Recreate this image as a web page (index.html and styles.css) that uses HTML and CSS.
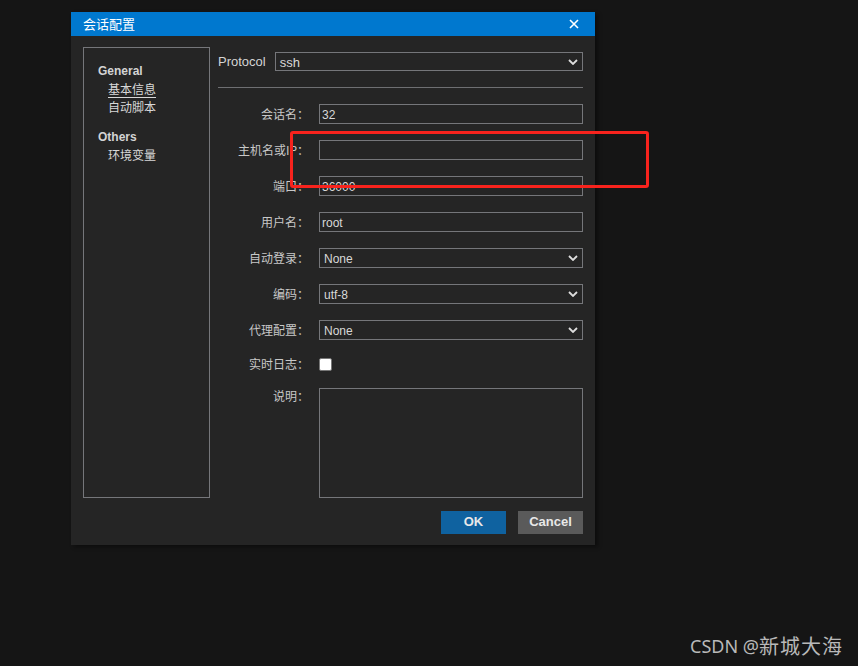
FILE: index.html
```html
<!DOCTYPE html>
<html lang="zh">
<head>
<meta charset="utf-8">
<link rel="stylesheet" href="styles.css">
</head>
<body>
<div class="screen">
  <div class="dialog">
    <div class="titlebar">
      <span class="title">会话配置</span>
      <svg class="close" width="10" height="10" viewBox="0 0 10 10"><path d="M1 1L9 9M9 1L1 9" stroke="#fff" stroke-width="1.6"/></svg>
    </div>
    <div class="body">
      <div class="sidebar">
        <div class="group">General</div>
        <div class="item active">基本信息</div>
        <div class="item">自动脚本</div>
        <div class="group second">Others</div>
        <div class="item">环境变量</div>
      </div>
      <div class="main">
        <div class="protocol">
          <span class="plabel">Protocol</span>
          <div class="select wide"><span>ssh</span><svg width="10" height="6" viewBox="0 0 10 6"><path d="M1 1L5 5L9 1" fill="none" stroke="#ddd" stroke-width="1.8"/></svg></div>
        </div>
        <div class="sep"></div>
        <div class="form">
          <label>会话名：</label><div class="input">32</div>
          <label>主机名或IP：</label><div class="input"></div>
          <label>端口：</label><div class="input">36000</div>
          <label>用户名：</label><div class="input">root</div>
          <label>自动登录：</label><div class="select"><span>None</span><svg width="10" height="6" viewBox="0 0 10 6"><path d="M1 1L5 5L9 1" fill="none" stroke="#ddd" stroke-width="1.8"/></svg></div>
          <label>编码：</label><div class="select"><span>utf-8</span><svg width="10" height="6" viewBox="0 0 10 6"><path d="M1 1L5 5L9 1" fill="none" stroke="#ddd" stroke-width="1.8"/></svg></div>
          <label>代理配置：</label><div class="select"><span>None</span><svg width="10" height="6" viewBox="0 0 10 6"><path d="M1 1L5 5L9 1" fill="none" stroke="#ddd" stroke-width="1.8"/></svg></div>
          <label class="short">实时日志：</label><div class="checkrow"><div class="checkbox"></div></div>
          <label class="top">说明：</label><div class="textarea"></div>
        </div>
        <div class="buttons">
          <div class="btn ok">OK</div>
          <div class="btn cancel">Cancel</div>
        </div>
      </div>
    </div>
  </div>
  <div class="annot"></div>
  <div class="watermark">CSDN @<span class="cjk">新城大海</span></div>
</div>
</body>
</html>
```

FILE: styles.css
```css
* { box-sizing: border-box; }
html, body { margin: 0; padding: 0; }
body {
  background: #151515;
  width: 858px;
  height: 666px;
  overflow: hidden;
  font-family: "Liberation Sans", "Noto Sans CJK SC", sans-serif;
  color: #d0d0d0;
}
.screen {
  position: relative;
  width: 858px;
  height: 666px;
  padding: 12px 0 0 71px;
}
.dialog {
  width: 524px;
  height: 533px;
  background: #252525;
  display: flex;
  flex-direction: column;
  box-shadow: 3px 2px 4px rgba(0,0,0,0.4);
}
.titlebar {
  height: 24px;
  background: #0078cf;
  display: flex;
  align-items: center;
  justify-content: space-between;
  padding: 0 16px 0 12px;
}
.title {
  color: #fff;
  font-family: "Noto Sans CJK SC", sans-serif;
  font-size: 13px;
  line-height: 24px;
}
.close { display: block; }
.body {
  display: flex;
  padding: 11px 12px 12px 12px;
  gap: 8px;
  flex: 1;
}
.sidebar {
  width: 127px;
  height: 451px;
  border: 1px solid #75767a;
  padding: 14px 0 0 14px;
  font-size: 12px;
}
.group {
  font-weight: bold;
  color: #d4d4d4;
  line-height: 18px;
}
.group.second { margin-top: 12px; }
.item {
  font-family: "Noto Sans CJK SC", sans-serif;
  padding-left: 10px;
  line-height: 18px;
  color: #d8d8d8;
}
.item.active {
  text-decoration: underline;
  text-underline-offset: 3px;
}
.main {
  width: 365px;
  display: flex;
  flex-direction: column;
}
.protocol {
  display: flex;
  align-items: center;
  gap: 9px;
  margin-top: 5px;
  height: 19px;
}
.plabel {
  font-size: 13px;
  color: #d4d4d4;
}
.select, .input, .textarea {
  border: 1px solid #75767a;
  background: #252525;
  color: #d8d8d8;
  font-size: 12px;
  height: 20px;
}
.select {
  display: flex;
  align-items: center;
  justify-content: space-between;
  padding: 0 4px 0 4px;
}
.select span { padding-top: 1px; }
.select svg { display: block; }
.select.wide {
  width: 308px;
  height: 19px;
  font-size: 13px;
}
.input {
  padding: 2px 0 0 2px;
  line-height: 16px;
}
.sep {
  height: 1px;
  background: #6e6f72;
  margin-top: 16px;
}
.form {
  display: grid;
  grid-template-columns: 91px 264px;
  column-gap: 10px;
  row-gap: 16px;
  margin-top: 16px;
  align-items: center;
}
.form label {
  font-family: "Noto Sans CJK SC", sans-serif;
  font-size: 12px;
  text-align: right;
  color: #c8c8c8;
  line-height: 20px;
}
.form label.short { line-height: 16px; }
.form label.top { align-self: start; line-height: 16px; }
.checkrow {
  height: 16px;
  display: flex;
  align-items: center;
}
.checkbox {
  width: 13px;
  height: 13px;
  background: #fff;
  border: 1px solid #777;
  border-radius: 2px;
}
.textarea { height: 110px; }
.buttons {
  display: flex;
  justify-content: flex-end;
  gap: 12px;
  margin-top: 13px;
}
.btn {
  width: 65px;
  height: 23px;
  display: flex;
  align-items: center;
  justify-content: center;
  font-size: 13px;
  font-weight: bold;
  color: #e8e8e8;
  padding-bottom: 2px;
}
.btn.ok { background: #0f62a0; }
.btn.cancel { background: #5a5a5a; }
.annot {
  position: absolute;
  left: 290px;
  top: 131px;
  width: 359px;
  height: 57px;
  border: 3px solid #f8231d;
  border-radius: 3px;
}
.watermark {
  position: absolute;
  left: 690px;
  top: 634px;
  font-family: "Noto Sans", "Noto Sans CJK SC", sans-serif;
  font-size: 18px;
  line-height: 24px;
  color: #b9b9b9;
  white-space: nowrap;
}
.watermark .cjk {
  font-family: "Noto Sans CJK SC", sans-serif;
  font-size: 20px;
  letter-spacing: 1px;
  vertical-align: -1px;
}
```
